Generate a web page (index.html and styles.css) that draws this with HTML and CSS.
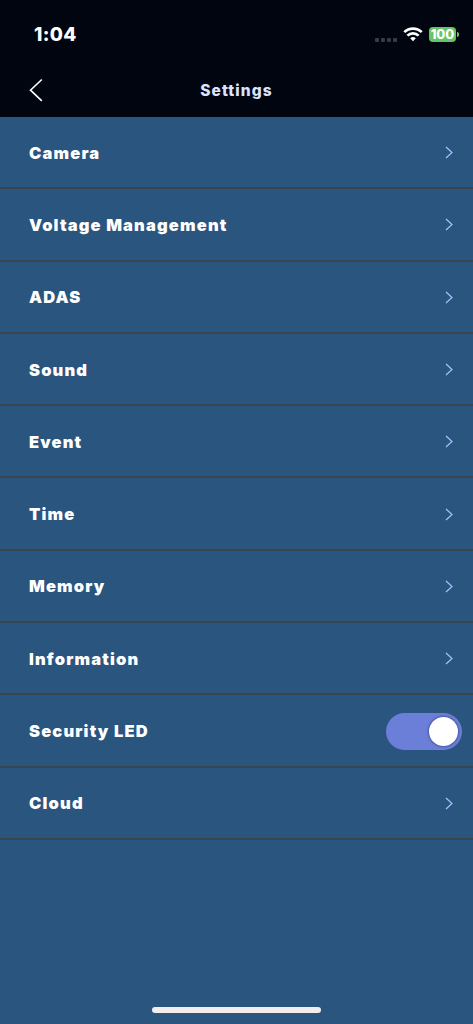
FILE: index.html
```html
<!DOCTYPE html>
<html lang="en">
<head>
    <meta charset="UTF-8">
    <meta name="viewport" content="width=device-width, initial-scale=1.0">
    <title>Settings</title>
    <link rel="stylesheet" href="styles.css">
</head>
<body>
    <header class="header">
        <div class="status-bar">
            <span class="time">1:04</span>
            <div class="status-icons">
                <div class="signal"><i></i><i></i><i></i><i></i></div>
                <svg class="wifi" width="20" height="15" viewBox="0 0 20 15" fill="none" stroke="#fff" stroke-width="2.7">
                    <path d="M1.3 5.1a12.4 12.4 0 0 1 17.4 0"/>
                    <path d="M4.4 8.6a8 8 0 0 1 11.2 0"/>
                    <path d="M10 14.2l-2.8-2.9a4 4 0 0 1 5.6 0z" fill="#fff" stroke="none"/>
                </svg>
                <div class="battery">100</div>
                <span class="battery-tip"></span>
            </div>
        </div>
        <div class="nav">
            <svg class="back" width="14" height="24" viewBox="0 0 14 24" fill="none" stroke="#fff" stroke-width="1.6">
                <path d="M12.8 1.5L1.5 12.2l11.3 10.7"/>
            </svg>
            <h1>Settings</h1>
        </div>
    </header>

    <ul class="menu">
        <li class="item">Camera <svg class="arrow" viewBox="0 0 8 13"><path d="M1 1l6 5.5L1 12"/></svg></li>
        <li class="item">Voltage Management <svg class="arrow" viewBox="0 0 8 13"><path d="M1 1l6 5.5L1 12"/></svg></li>
        <li class="item">ADAS <svg class="arrow" viewBox="0 0 8 13"><path d="M1 1l6 5.5L1 12"/></svg></li>
        <li class="item">Sound <svg class="arrow" viewBox="0 0 8 13"><path d="M1 1l6 5.5L1 12"/></svg></li>
        <li class="item">Event <svg class="arrow" viewBox="0 0 8 13"><path d="M1 1l6 5.5L1 12"/></svg></li>
        <li class="item">Time <svg class="arrow" viewBox="0 0 8 13"><path d="M1 1l6 5.5L1 12"/></svg></li>
        <li class="item">Memory <svg class="arrow" viewBox="0 0 8 13"><path d="M1 1l6 5.5L1 12"/></svg></li>
        <li class="item">Information <svg class="arrow" viewBox="0 0 8 13"><path d="M1 1l6 5.5L1 12"/></svg></li>
        <li class="item">Security LED <span class="switch"><span class="knob"></span></span></li>
        <li class="item">Cloud <svg class="arrow" viewBox="0 0 8 13"><path d="M1 1l6 5.5L1 12"/></svg></li>
    </ul>

    <div class="home-bar"></div>
</body>
</html>
```

FILE: styles.css
```css
* {
    box-sizing: border-box;
}
body {
    display: flex;
    flex-direction: column;
    height: 1024px;
    margin: 0;
    background-color: #2a557f;
    font-family: Inter, "Liberation Sans", sans-serif;
    color: #fff;
}
.header {
    height: 117px;
    background-color: #000510;
}
.status-bar {
    display: flex;
    justify-content: space-between;
    align-items: center;
    height: 69px;
    padding: 0 15px 0 34px;
}
.time {
    font-size: 19px;
    font-weight: 800;
    letter-spacing: 0.3px;
    line-height: 24px;
    padding-top: 1px;
}
.status-icons {
    display: flex;
    align-items: center;
}
.signal {
    display: flex;
    gap: 2px;
    margin: 10px 6px 0 0;
}
.signal i {
    width: 4px;
    height: 4px;
    border-radius: 1px;
    background-color: #383b45;
}
.wifi {
    margin-right: 6px;
}
.battery {
    width: 27px;
    height: 15px;
    border-radius: 4px;
    background-color: #65c466;
    font-size: 13px;
    font-weight: 800;
    line-height: 15px;
    text-align: center;
}
.battery-tip {
    width: 2px;
    height: 5px;
    margin: 0 -1px 0 1px;
    border-radius: 0 2px 2px 0;
    background-color: #65c466;
}
.nav {
    display: grid;
    grid-template-columns: 1fr auto 1fr;
    align-items: center;
    height: 42px;
    padding: 0 29px;
}
.nav h1 {
    margin: 0;
    font-size: 15.5px;
    font-weight: 800;
    letter-spacing: 1.1px;
    color: #dbe3ff;
}
.menu {
    margin: 0;
    padding: 0;
    list-style: none;
}
.item {
    display: flex;
    justify-content: space-between;
    align-items: center;
    height: 72.3px;
    padding: 1px 11px 0 29px;
    border-bottom: 1.8px solid #38454f;
    border-bottom-width: 2px;
    font-size: 16.5px;
    font-weight: 900;
    letter-spacing: 1.16px;
}
.arrow {
    width: 8px;
    height: 13px;
    margin-right: 9px;
    fill: none;
    stroke: #a9c1ff;
    stroke-width: 1.2;
}
/* Toggle */
.switch {
    display: flex;
    justify-content: flex-end;
    align-items: center;
    width: 76px;
    height: 37px;
    padding-right: 4px;
    border-radius: 19px;
    background-color: #6c7fd8;
}
.knob {
    width: 29px;
    height: 29px;
    border-radius: 50%;
    background-color: #fff;
    box-shadow: 0 0 3px rgba(20,20,90,0.8);
}
.home-bar {
    width: 169px;
    height: 6px;
    margin: auto auto 11px;
    border-radius: 3px;
    background-color: #f0efee;
}
```
